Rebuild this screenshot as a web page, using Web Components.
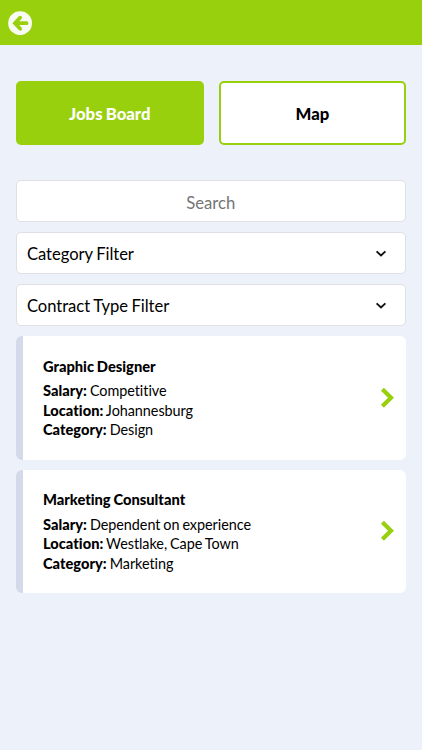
<!DOCTYPE html>
<html lang="en">
<head>
<meta charset="utf-8">
<title>Jobs Board</title>
<style>
html, body { margin: 0; height: 100%; }
body { background: #edf1f9; font-family: Lato, "Open Sans", sans-serif; font-variant-ligatures: none; color: #000; }
</style>
</head>
<body>
<jobs-app></jobs-app>
<script>
const define = (name, html) => {
  const template = document.createElement('template');
  template.innerHTML = html;
  customElements.define(name, class extends HTMLElement {
    constructor() {
      super();
      this.attachShadow({ mode: 'open' }).append(template.content.cloneNode(true));
    }
  });
};

define('top-bar', `
  <style>
    :host { display: flex; align-items: center; height: 45px; box-sizing: border-box; padding-left: 8px; background: #99d00d; }
    svg { display: block; }
  </style>
  <svg width="24" height="24" viewBox="0 0 24 24" role="img" aria-label="Back">
    <circle cx="12.1" cy="12.2" r="11.9" fill="#f8fbf2"/>
    <path d="M12.2 6.6 6.9 12.2l5.3 5.6M7.4 12.2h11.2" fill="none" stroke="#99d00d" stroke-width="3.7" stroke-linecap="round" stroke-linejoin="miter"/>
  </svg>`);

define('tab-button', `
  <style>
    :host { display: flex; align-items: center; justify-content: center; height: 64px; box-sizing: border-box; padding-top: 1px; border: 2px solid #99d00d; border-radius: 5px; background: #fff; font-size: 16.7px; font-weight: 900; line-height: 20px; word-spacing: -0.8px; }
    :host([active]) { background: #99d00d; color: #fff; }
  </style>
  <slot></slot>`);

define('search-field', `
  <style>
    :host { display: flex; align-items: center; justify-content: center; height: 42px; box-sizing: border-box; padding-top: 3px; border: 1px solid #dfe0e5; border-radius: 5px; background: #fff; color: #757575; font-size: 16.7px; line-height: 20px; }
  </style>
  <slot></slot>`);

define('select-field', `
  <style>
    :host { display: flex; align-items: center; justify-content: space-between; height: 42px; box-sizing: border-box; padding: 2px 18.5px 0 10.5px; border: 1px solid #dfe0e5; border-radius: 5px; background: #fff; font-size: 16.6px; line-height: 20px; letter-spacing: -0.05px; word-spacing: -0.6px; }
    svg { display: block; }
  </style>
  <span><slot></slot></span>
  <svg width="12" height="8" viewBox="0 0 12 8"><path d="M1.6 1.4 6 5.5l4.4-4.1" fill="none" stroke="#111" stroke-width="1.9"/></svg>`);

define('job-card', `
  <style>
    :host { display: flex; align-items: center; justify-content: space-between; height: 123.5px; box-sizing: border-box; padding: 0 11px 0 20.4px; border-left: 7px solid #d5daea; border-radius: 6px; background: #fff; font-size: 14.4px; line-height: 19.4px; letter-spacing: -0.04px; word-spacing: -0.7px; }
    .details { padding-top: 1px; }
    h2 { margin: 0 0 5px; font-size: 14.7px; font-weight: 900; line-height: 19.4px; letter-spacing: 0; }
    svg { display: block; }
  </style>
  <div class="details"><h2><slot name="title"></slot></h2><slot></slot></div>
  <svg width="15" height="22" viewBox="0 0 15 22"><path d="M2.4 2.2 11 10.7l-8.6 8.5" fill="none" stroke="#99d00d" stroke-width="4.2"/></svg>`);

define('job-detail', `
  <style>:host { display: block; } b { font-size: 14.6px; font-weight: 900; letter-spacing: 0.05px; }</style>
  <b><slot name="label"></slot></b> <slot></slot>`);

define('jobs-app', `
  <style>
    :host { display: block; min-height: 750px; background: #edf1f9; }
    main { padding: 36px 16px 0 15.5px; }
    nav { display: grid; grid-template-columns: 188.5px 187px; gap: 15px; margin-bottom: 35px; }
    section { display: grid; gap: 10px; }
  </style>
  <top-bar></top-bar>
  <main>
    <nav><tab-button active>Jobs Board</tab-button><tab-button>Map</tab-button></nav>
    <section>
      <search-field>Search</search-field>
      <select-field>Category Filter</select-field>
      <select-field>Contract Type Filter</select-field>
      <job-card><span slot="title">Graphic Designer</span>
        <job-detail><span slot="label">Salary:</span>Competitive</job-detail>
        <job-detail><span slot="label">Location:</span>Johannesburg</job-detail>
        <job-detail><span slot="label">Category:</span>Design</job-detail>
      </job-card>
      <job-card><span slot="title">Marketing Consultant</span>
        <job-detail><span slot="label">Salary:</span>Dependent on experience</job-detail>
        <job-detail><span slot="label">Location:</span>Westlake, Cape Town</job-detail>
        <job-detail><span slot="label">Category:</span>Marketing</job-detail>
      </job-card>
    </section>
  </main>`);
</script>
</body>
</html>
